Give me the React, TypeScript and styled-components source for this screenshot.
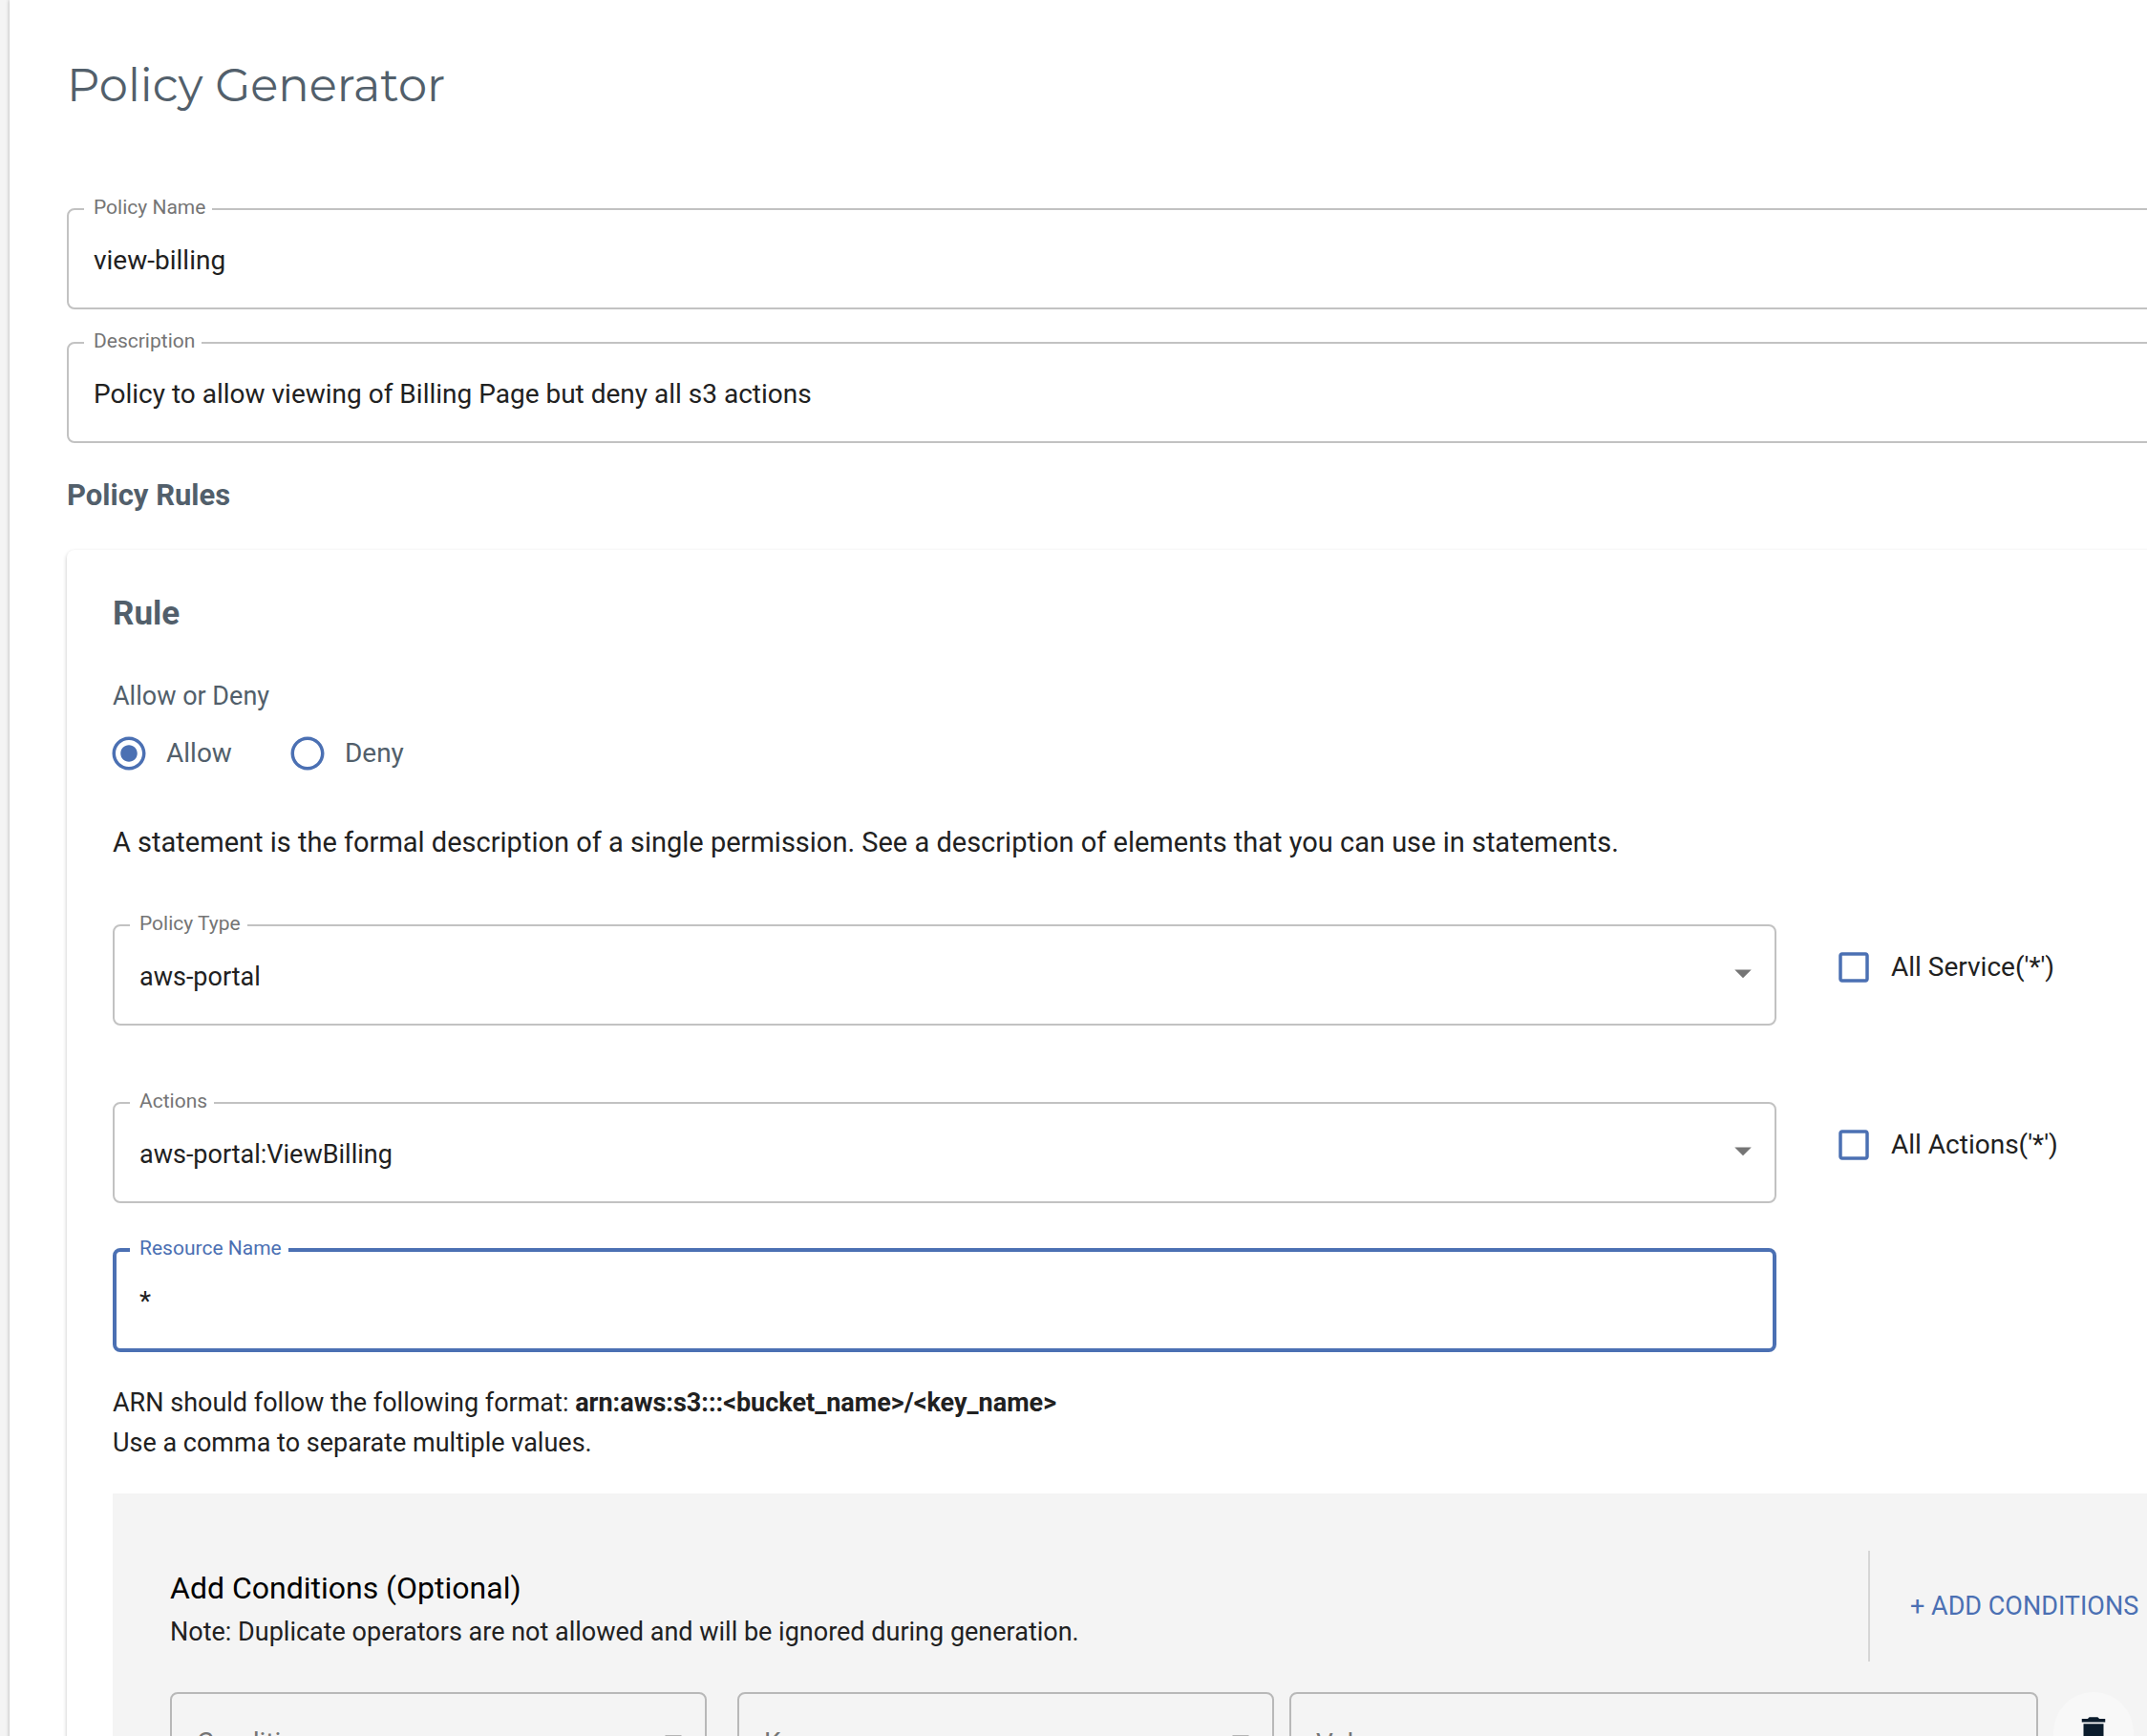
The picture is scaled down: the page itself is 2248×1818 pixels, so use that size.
import React, { useId, useState } from "react";
import styled, { createGlobalStyle, css } from "styled-components";
import {
  MdArrowDropDown,
  MdCheckBox,
  MdCheckBoxOutlineBlank,
  MdDelete,
  MdRadioButtonChecked,
  MdRadioButtonUnchecked,
} from "react-icons/md";

const color = {
  page: "#f4f4f4",
  paper: "#ffffff",
  slate: "#525f6b",
  text: "#212121",
  muted: "#757575",
  outline: "#c2c2c2",
  primary: "#4b70b3",
};

const GlobalStyle = createGlobalStyle`
  *, *::before, *::after { box-sizing: border-box; }
  body {
    margin: 0;
    background: ${color.page};
    color: ${color.text};
    font-family: Roboto, "Liberation Sans", sans-serif;
    font-size: 28px;
    line-height: 42px;
  }
`;

const Viewport = styled.div`
  height: 100vh;
  padding-left: 10px;
  overflow: hidden;
`;

/* The sheet is wider than the window and runs on past its right edge. */
const Sheet = styled.main`
  width: calc(100% + 176px);
  min-height: 100vh;
  padding: 51px 60px;
  background: ${color.paper};
  box-shadow: 0 0 4px rgba(0, 0, 0, 0.3);
`;

const Title = styled.h1`
  margin: 0 0 78px;
  color: ${color.slate};
  font-family: Montserrat, Inter, sans-serif;
  font-size: 48px;
  font-weight: 400;
  line-height: 76px;
`;

const FieldStack = styled.div`
  display: grid;
  gap: 21px;
`;

const SectionTitle = styled.h2`
  margin: 36px 0 38px;
  color: ${color.slate};
  font-size: 31px;
  font-weight: 700;
  line-height: 38px;
`;

const Card = styled.section`
  padding: 49px 48px 48px;
  border-radius: 8px;
  background: ${color.paper};
  box-shadow: 0 2px 4px rgba(0, 0, 0, 0.24);
`;

const CardTitle = styled.h3`
  margin: 0;
  color: ${color.slate};
  font-size: 35px;
  font-weight: 700;
  line-height: 36px;
`;

const RadioSet = styled.fieldset`
  margin: 51px 0;
  padding: 0;
  border: 0;
  color: ${color.slate};
`;

const RadioLegend = styled.legend`
  padding: 0;
  margin-bottom: 22px;
  font-size: 27px;
  line-height: 34px;
`;

const RadioRow = styled.div`
  display: flex;
  gap: 58px;
  margin-left: -4px;
`;

const ChoiceLabel = styled.label`
  display: flex;
  align-items: center;
  gap: 18px;
  cursor: pointer;
`;

const ChoiceMark = styled.span`
  position: relative;
  display: flex;
  color: ${color.primary};
  font-size: 42px;
`;

const ChoiceInput = styled.input`
  position: absolute;
  inset: 0;
  width: 100%;
  height: 100%;
  margin: 0;
  opacity: 0;
  cursor: pointer;
`;

const Statement = styled.p`
  margin: 0 0 52px;
  font-size: 29px;
`;

const RuleGrid = styled.div`
  display: grid;
  grid-template-columns: minmax(0, 1fr) 396px;
  column-gap: 60px;
`;

const RuleRow = styled(RuleGrid)<{ $space: number }>`
  margin-bottom: ${(p) => p.$space}px;
`;

const RuleSide = styled.div`
  padding-top: 37px;
`;

const Outline = styled.fieldset<{ $active?: boolean }>`
  min-width: 0;
  margin: 0;
  padding: 0;
  border: ${(p) => (p.$active ? 4 : 2)}px solid ${(p) => (p.$active ? color.primary : color.outline)};
  border-radius: 8px;
`;

const OutlineLegend = styled.legend<{ $active?: boolean }>`
  margin-left: ${(p) => (p.$active ? 14 : 16)}px;
  padding: 0 7px 4px 10px;
  color: ${(p) => (p.$active ? color.primary : color.muted)};
  font-size: 21px;
  line-height: 24px;
`;

const control = css<{ $active?: boolean }>`
  display: block;
  width: 100%;
  height: 89px;
  padding: 0 ${(p) => (p.$active ? 24 : 26)}px 10px;
  border: 0;
  outline: 0;
  border-radius: 6px;
  background: transparent;
  color: ${color.text};
  font: inherit;
`;

const TextInput = styled.input<{ $active?: boolean }>`
  ${control}
`;

const SelectInput = styled.select`
  ${control}
  appearance: none;
  font-size: 27px;
`;

const SelectWrap = styled.div`
  position: relative;
`;

const SelectArrow = styled(MdArrowDropDown)<{ $top: number }>`
  position: absolute;
  top: ${(p) => p.$top}px;
  right: 12px;
  color: ${color.muted};
  font-size: 42px;
  pointer-events: none;
`;

const Helper = styled.p`
  margin: 32px 0;
  font-size: 27px;
`;

const Conditions = styled.section`
  padding: 60px;
  background: ${color.page};
`;

const ConditionsHead = styled.div`
  display: flex;
  justify-content: space-between;
  margin-bottom: 32px;
`;

const ConditionsText = styled.div`
  padding-top: 14px;
`;

const ConditionsTitle = styled.h4`
  margin: 0;
  color: #000;
  font-size: 32px;
  font-weight: 400;
  line-height: 50px;
`;

const Note = styled.p`
  margin: 0;
  font-size: 27px;
`;

const AddPane = styled.div`
  display: flex;
  align-items: center;
  width: 300px;
  height: 116px;
  padding-left: 28px;
  border-left: 2px solid #d6d6d6;
`;

const AddButton = styled.button`
  padding: 10px 14px;
  border: 0;
  background: none;
  color: ${color.primary};
  font: inherit;
  font-size: 27px;
  white-space: nowrap;
  text-transform: uppercase;
  cursor: pointer;
`;

const ConditionRow = styled.div`
  display: grid;
  grid-template-columns: 578fr 562fr 784fr 84px;
  column-gap: 16px;
  padding-right: 22px;
`;

const PlainBox = styled.div<{ $spaced?: boolean }>`
  position: relative;
  min-width: 0;
  margin-right: ${(p) => (p.$spaced ? 16 : 0)}px;
  border: 2px solid #b8b8b8;
  border-radius: 8px;
`;

const plain = css`
  display: block;
  width: 100%;
  height: 102px;
  padding: 0 26px;
  border: 0;
  outline: 0;
  background: transparent;
  color: ${color.muted};
  font: inherit;
  &::placeholder { color: ${color.muted}; opacity: 1; }
`;

const PlainSelect = styled.select`
  ${plain}
  appearance: none;
`;

const PlainInput = styled.input`
  ${plain}
`;

const RoundButton = styled.button`
  display: flex;
  align-items: center;
  justify-content: center;
  width: 84px;
  height: 84px;
  padding: 0;
  border: 0;
  border-radius: 50%;
  background: #f8f8f8;
  color: #0b1c2c;
  font-size: 42px;
  cursor: pointer;
`;

type TextFieldProps = { label: string; initial: string; active?: boolean };

function TextField({ label, initial, active }: TextFieldProps) {
  const [value, setValue] = useState(initial);
  const id = useId();
  return (
    <Outline $active={active}>
      <OutlineLegend $active={active}>
        <label htmlFor={id}>{label}</label>
      </OutlineLegend>
      <TextInput id={id} $active={active} value={value} onChange={(e) => setValue(e.target.value)} />
    </Outline>
  );
}

function SelectField({ label, options }: { label: string; options: string[] }) {
  const id = useId();
  return (
    <Outline>
      <OutlineLegend>
        <label htmlFor={id}>{label}</label>
      </OutlineLegend>
      <SelectWrap>
        <SelectInput id={id}>
          {options.map((o) => (
            <option key={o}>{o}</option>
          ))}
        </SelectInput>
        <SelectArrow $top={15} aria-hidden />
      </SelectWrap>
    </Outline>
  );
}

function Checkbox({ label }: { label: string }) {
  const [checked, setChecked] = useState(false);
  return (
    <ChoiceLabel>
      <ChoiceMark>
        {checked ? <MdCheckBox /> : <MdCheckBoxOutlineBlank />}
        <ChoiceInput type="checkbox" checked={checked} onChange={() => setChecked(!checked)} />
      </ChoiceMark>
      {label}
    </ChoiceLabel>
  );
}

function EffectRadios() {
  const [effect, setEffect] = useState("Allow");
  return (
    <RadioSet>
      <RadioLegend>Allow or Deny</RadioLegend>
      <RadioRow>
        {["Allow", "Deny"].map((name) => (
          <ChoiceLabel key={name}>
            <ChoiceMark>
              {effect === name ? <MdRadioButtonChecked /> : <MdRadioButtonUnchecked />}
              <ChoiceInput
                type="radio"
                name="effect"
                checked={effect === name}
                onChange={() => setEffect(name)}
              />
            </ChoiceMark>
            {name}
          </ChoiceLabel>
        ))}
      </RadioRow>
    </RadioSet>
  );
}

export default function App() {
  return (
    <>
      <GlobalStyle />
      <Viewport>
        <Sheet>
          <Title>Policy Generator</Title>
          <FieldStack>
            <TextField label="Policy Name" initial="view-billing" />
            <TextField
              label="Description"
              initial="Policy to allow viewing of Billing Page but deny all s3 actions"
            />
          </FieldStack>
          <SectionTitle>Policy Rules</SectionTitle>
          <Card>
            <CardTitle>Rule</CardTitle>
            <EffectRadios />
            <Statement>
              A statement is the formal description of a single permission. See a description of
              elements that you can use in statements.
            </Statement>
            <RuleRow $space={67}>
              <SelectField label="Policy Type" options={["aws-portal"]} />
              <RuleSide>
                <Checkbox label="All Service('*')" />
              </RuleSide>
            </RuleRow>
            <RuleRow $space={35}>
              <SelectField label="Actions" options={["aws-portal:ViewBilling"]} />
              <RuleSide>
                <Checkbox label="All Actions('*')" />
              </RuleSide>
            </RuleRow>
            <RuleGrid>
              <TextField label="Resource Name" initial="*" active />
            </RuleGrid>
            <Helper>
              ARN should follow the following format:{" "}
              <b>arn:aws:s3:::&lt;bucket_name&gt;/&lt;key_name&gt;</b>
              <br />
              Use a comma to separate multiple values.
            </Helper>
            <Conditions>
              <ConditionsHead>
                <ConditionsText>
                  <ConditionsTitle>Add Conditions (Optional)</ConditionsTitle>
                  <Note>
                    Note: Duplicate operators are not allowed and will be ignored during generation.
                  </Note>
                </ConditionsText>
                <AddPane>
                  <AddButton type="button">+ Add Conditions</AddButton>
                </AddPane>
              </ConditionsHead>
              <ConditionRow>
                <PlainBox $spaced>
                  <PlainSelect aria-label="Condition">
                    <option>Condition</option>
                  </PlainSelect>
                  <SelectArrow $top={26} aria-hidden />
                </PlainBox>
                <PlainBox>
                  <PlainSelect aria-label="Key">
                    <option>Key</option>
                  </PlainSelect>
                  <SelectArrow $top={26} aria-hidden />
                </PlainBox>
                <PlainBox>
                  <PlainInput aria-label="Value" placeholder="Value" />
                </PlainBox>
                <RoundButton type="button" aria-label="Delete condition">
                  <MdDelete />
                </RoundButton>
              </ConditionRow>
            </Conditions>
          </Card>
        </Sheet>
      </Viewport>
    </>
  );
}
